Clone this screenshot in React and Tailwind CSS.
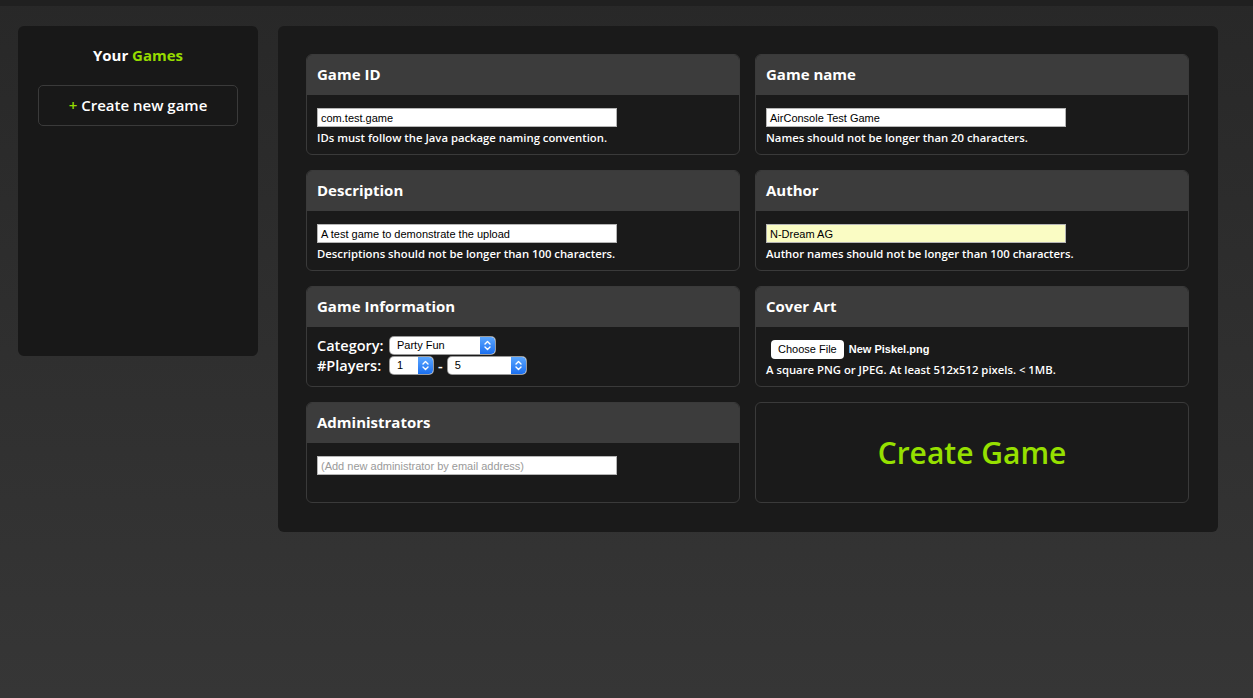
import React from 'react';

const head = { fontFamily: '"Open Sans", "Noto Sans", sans-serif' };
const arial = { fontFamily: '"Liberation Sans", Arial, sans-serif' };

const Stepper = () => (
  <span className="flex h-full w-[15px] items-center justify-center rounded-r-[4px] bg-gradient-to-b from-[#5aa6ff] to-[#1a6ff0]">
    <svg width="7" height="11" viewBox="0 0 7 11" fill="none" stroke="white" strokeWidth="1.4" strokeLinecap="round" strokeLinejoin="round">
      <path d="M1 4 L3.5 1.5 L6 4" />
      <path d="M1 7 L3.5 9.5 L6 7" />
    </svg>
  </span>
);

const Select = ({ value, width }) => (
  <div className={`flex h-[17px] shrink-0 items-center overflow-hidden rounded-[4px] bg-white text-[11px] font-normal text-black shadow-[0_0_0_1px_#9a9a9a] ${width}`} style={arial}>
    <span className="flex-1 pl-[7px] leading-none">{value}</span>
    <Stepper />
  </div>
);

const TextBox = ({ value, placeholder, yellow }) => (
  <div
    className={`h-[19px] w-[300px] border border-[#b5b5b5] px-[3px] text-[11px] leading-[18px] ${yellow ? 'bg-[#fafcc4]' : 'bg-white'} ${value ? 'text-black' : 'text-[#9a9a9a]'}`}
    style={arial}
  >
    {value || placeholder}
  </div>
);

const Card = ({ title, children }) => (
  <div className="h-[101px] overflow-hidden rounded-[6px] border border-[#3a3a3a] bg-[#1a1a1a]">
    <div className="flex h-[40px] items-center bg-[#3c3c3c] px-[10px] pb-[1px] text-[15px] font-bold text-white" style={head}>
      {title}
    </div>
    <div className="px-[10px] pt-[13px]">{children}</div>
  </div>
);

const Hint = ({ children }) => (
  <p className="mt-[3px] text-[11.3px] font-semibold text-white" style={head}>{children}</p>
);

export default function App() {
  return (
    <div className="min-h-[698px] bg-gradient-to-b from-[#282828] to-[#363636]">
      <div className="h-[6px] bg-[#202020]" />
      <div className="flex items-start gap-[20px] px-[18px] pt-[20px]">
        <aside className="flex h-[330px] w-[240px] flex-col items-center rounded-[6px] bg-[#181818] px-[20px] pt-[18px]">
          <h2 className="text-[15px] font-bold text-white" style={head}>
            Your <span className="text-[#96dc00]">Games</span>
          </h2>
          <button className="mt-[18px] flex h-[41px] w-full items-center justify-center rounded-[5px] border border-[#3a3a3a] text-[15px] font-semibold text-white" style={head}>
            <span className="mr-[4px] text-[#96dc00]">+</span>Create new game
          </button>
        </aside>

        <main className="grid w-[940px] grid-cols-[434px_434px] gap-[15px] rounded-[6px] bg-[#1a1a1a] px-[28px] pt-[28px] pb-[29px]">
          <Card title="Game ID">
            <TextBox value="com.test.game" />
            <Hint>IDs must follow the Java package naming convention.</Hint>
          </Card>
          <Card title="Game name">
            <TextBox value="AirConsole Test Game" />
            <Hint>Names should not be longer than 20 characters.</Hint>
          </Card>
          <Card title="Description">
            <TextBox value="A test game to demonstrate the upload" />
            <Hint>Descriptions should not be longer than 100 characters.</Hint>
          </Card>
          <Card title="Author">
            <TextBox value="N-Dream AG" yellow />
            <Hint>Author names should not be longer than 100 characters.</Hint>
          </Card>
          <Card title="Game Information">
            <div className="-mt-[3px] flex flex-col gap-[3px] text-[14.5px] font-semibold leading-[17px] text-white" style={head}>
              <div className="flex items-center">
                <span className="w-[73px] shrink-0">Category:</span>
                <Select value="Party Fun" width="w-[105px]" />
              </div>
              <div className="flex items-center">
                <span className="w-[73px] shrink-0">#Players:</span>
                <Select value="1" width="w-[43px]" />
                <span className="mx-[5px]">-</span>
                <Select value="5" width="w-[78px]" />
              </div>
            </div>
          </Card>
          <Card title="Cover Art">
            <div className="flex items-center gap-[5px] pl-[5px] text-[11px] text-white" style={arial}>
              <span className="rounded-[4px] bg-white px-[7px] py-[1px] text-black">Choose File</span>
              <span className="font-semibold">New Piskel.png</span>
            </div>
            <Hint>A square PNG or JPEG. At least 512x512 pixels. &lt; 1MB.</Hint>
          </Card>
          <Card title="Administrators">
            <TextBox placeholder="(Add new administrator by email address)" />
          </Card>
          <button className="flex h-[101px] items-center justify-center rounded-[6px] border border-[#3a3a3a] bg-[#1a1a1a] text-[30px] font-semibold text-[#96e000]" style={head}>
            Create Game
          </button>
        </main>
      </div>
    </div>
  );
}
